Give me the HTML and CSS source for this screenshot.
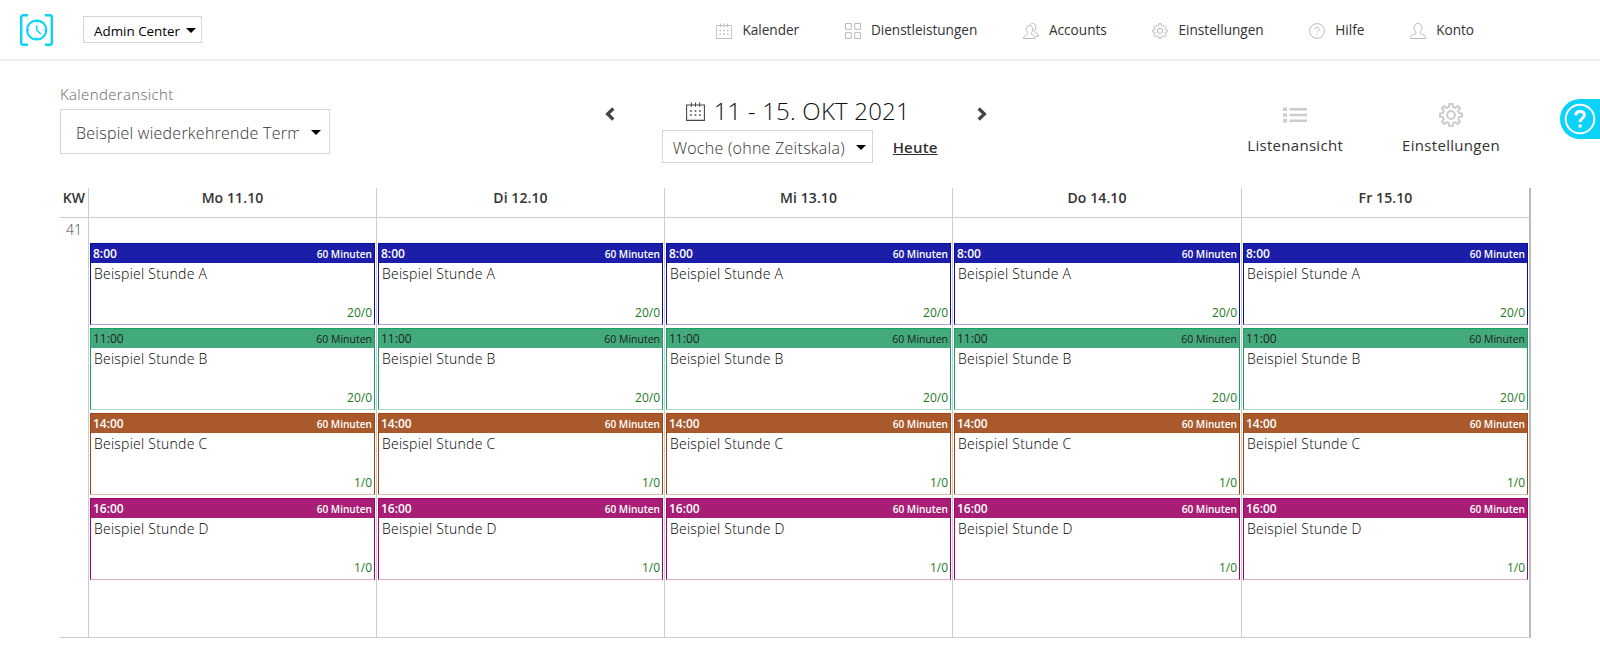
FILE: index.html
```
<!DOCTYPE html>
<html lang="de">
<head>
    <meta charset="utf-8">
    <title>Kalender</title>
    <link rel="stylesheet" href="styles.css">
</head>
<body>
    <svg width="0" height="0" class="sprite">
        <symbol id="i-calendar" viewBox="0 0 16 16">
            <path d="M.5 2.500h15v13H.5zM4.500.5v3.500M8 .5v3.500M11.500.5v3.500" stroke-width=".9"/>
            <path d="M3.500 7.500h1.400M7.300 7.500h1.400M11.100 7.500h1.400M3.500 11h1.400M7.300 11h1.400M11.100 11h1.400" stroke-width="1.300"/>
        </symbol>
        <symbol id="i-grid" viewBox="0 0 16 16">
            <path d="M.5.5h5.800v5.800H.5zM9.700.5h5.800v5.800H9.700zM.5 9.700h5.800v5.800H.5zM9.700 9.700h5.800v5.800H9.700z"/>
        </symbol>
        <symbol id="i-users" viewBox="0 0 16 16">
            <path d="M6.500 2.700c2 0 3.300 1.400 3.300 3.500 0 1.700-.7 2.700-1.500 3.500v1.400c.6 1 3.900 1.200 3.900 4.400H.5c0-3.200 3.500-3.400 4.100-4.400V9.700c-.8-.8-1.400-1.800-1.400-3.500 0-2.100 1.300-3.500 3.300-3.500z"/>
            <path d="M6.800 2.500C7.300 1.200 8.300.5 9.600.5c2 0 3.200 1.500 3.200 3.500 0 1.600-.6 2.600-1.400 3.400v1.300c.6 1 4.100 1.400 4.100 4.600h-3.200"/>
        </symbol>
        <symbol id="i-gear" viewBox="0 0 24 24">
            <path d="M10.400 1h3.200l.5 3 2.200.9 2.500-1.800 2.200 2.200-1.800 2.500.9 2.200 2.900.5v3.100l-2.900.5-.9 2.200 1.800 2.500-2.200 2.200-2.500-1.800-2.200.9-.5 3h-3.200l-.5-3-2.200-.9L5.200 21 3 18.800l1.800-2.500-.9-2.200-2.900-.5v-3.100l2.900-.5.9-2.200L3 5.300l2.200-2.200 2.500 1.800 2.200-.9z"/>
            <circle cx="12" cy="12" r="3.900"/>
        </symbol>
        <symbol id="i-help" viewBox="0 0 16 16">
            <circle cx="8" cy="8" r="7.400"/>
            <path d="M5.900 6.300c0-1.300.8-2.100 2.100-2.100s2.200.8 2.200 2c0 1.700-2.200 1.700-2.200 3.400M8 10.900v1.200"/>
        </symbol>
        <symbol id="i-user" viewBox="0 0 16 16">
            <path d="M8 .5c2.400 0 4 1.700 4 4.200 0 2-.8 3.300-1.900 4.200v1.500c.7 1.200 5.400 1.200 5.400 4v1.100H.5v-1.100c0-2.800 4.700-2.800 5.400-4V8.900C4.800 8 4 6.700 4 4.700 4 2.200 5.600.5 8 .5z"/>
        </symbol>
    </svg>

    <header class="topbar">
        <svg class="logo" viewBox="0 0 33 32">
            <path d="M8 1.200H3.200a2 2 0 0 0-2 2v25.600a2 2 0 0 0 2 2H8M25 1.200h4.800a2 2 0 0 1 2 2v25.600a2 2 0 0 1-2 2H25" stroke-width="2.400"/>
            <circle cx="16.700" cy="16" r="9.600" stroke-width="2"/>
            <path d="M16.700 11.500V16l4 4M16.700 6.500v2M16.700 23.500v2M7.200 16h2M24.200 16h2" stroke-width="1.600"/>
        </svg>
        <div class="select select-admin"><span>Admin Center</span></div>
        <nav>
            <a><svg class="icon"><use href="#i-calendar"/></svg>Kalender</a>
            <a><svg class="icon"><use href="#i-grid"/></svg>Dienstleistungen</a>
            <a><svg class="icon"><use href="#i-users"/></svg>Accounts</a>
            <a><svg class="icon small-gear"><use href="#i-gear"/></svg>Einstellungen</a>
            <a><svg class="icon"><use href="#i-help"/></svg>Hilfe</a>
            <a><svg class="icon"><use href="#i-user"/></svg>Konto</a>
        </nav>
    </header>

    <div class="toolbar">
        <div class="view">
            <label>Kalenderansicht</label>
            <div class="select select-view"><span>Beispiel wiederkehrende Termine</span></div>
        </div>

        <div class="period">
            <svg class="arrow" viewBox="0 0 10 14"><path d="M8.300 1.500 2.600 7l5.700 5.500"/></svg>
            <div class="period-main">
                <div class="period-title"><svg class="icon"><use href="#i-calendar"/></svg>11 - 15. OKT 2021</div>
                <div class="period-row">
                    <div class="select select-scale"><span>Woche (ohne Zeitskala)</span></div>
                    <a class="today">Heute</a>
                </div>
            </div>
            <svg class="arrow" viewBox="0 0 10 14"><path d="M1.700 1.500 7.400 7l-5.700 5.500"/></svg>
        </div>

        <div class="actions">
            <a>
                <svg class="list" viewBox="0 0 24 24"><path d="M0 6.200h4M0 12h4M0 17.800h4" stroke-width="3.600"/><path d="M6.500 6.200H24M6.500 12H24M6.500 17.800H24" stroke-width="2.400"/></svg>
                Listenansicht
            </a>
            <a>
                <svg class="gear"><use href="#i-gear"/></svg>
                Einstellungen
            </a>
        </div>
    </div>

    <div class="help-tab">
        <svg viewBox="0 0 32 32"><circle cx="16" cy="16" r="14.300" stroke-width="2"/><path d="M11.700 12.300c.2-2.500 1.900-3.900 4.400-3.900 2.600 0 4.300 1.400 4.300 3.700 0 3.200-4.300 3.300-4.300 6.900M16.100 21.400v3.200" stroke-width="3"/></svg>
    </div>

    <table class="calendar">
        <thead>
            <tr><th class="kw">KW</th><th>Mo 11.10</th><th>Di 12.10</th><th>Mi 13.10</th><th>Do 14.10</th><th>Fr 15.10</th></tr>
        </thead>
        <tbody>
            <tr id="week"><td class="kw">41</td></tr>
        </tbody>
    </table>

    <script>
        const lessons = [
            { time: "8:00", name: "Beispiel Stunde A", seats: "20/0", color: "blue" },
            { time: "11:00", name: "Beispiel Stunde B", seats: "20/0", color: "green" },
            { time: "14:00", name: "Beispiel Stunde C", seats: "1/0", color: "brown" },
            { time: "16:00", name: "Beispiel Stunde D", seats: "1/0", color: "pink" }
        ];
        const week = document.getElementById("week");
        for (let day = 0; day < 5; day++) {
            const cell = document.createElement("td");
            cell.innerHTML = lessons.map(l =>
                `<div class="event ${l.color}">
                    <div class="event-head"><span>${l.time}</span><small>60 Minuten</small></div>
                    <div class="event-name">${l.name}</div>
                    <div class="event-seats">${l.seats}</div>
                </div>`
            ).join("");
            week.appendChild(cell);
        }
    </script>
</body>
</html>
```
FILE: styles.css
```
* {
    box-sizing: border-box;
}
body {
    margin: 0;
    font-family: "Open Sans", sans-serif;
    font-size: 14px;
    color: #333;
    background: #fff;
}
svg {
    fill: none;
    stroke: currentColor;
    flex: none;
}
.sprite {
    position: absolute;
}
.icon {
    width: 16px;
    height: 16px;
}

/* top bar */
.topbar {
    display: flex;
    align-items: center;
    height: 61px;
    padding-left: 20px;
    border-bottom: 2px solid #eee;
}
.logo {
    width: 33px;
    height: 32px;
    color: #0cd2fa;
}
nav {
    display: flex;
    margin: 0 126px 0 auto;
    gap: 45.700px;
    font-size: 13.600px;
}
nav a {
    display: flex;
    align-items: center;
    gap: 10px;
}
nav .icon {
    margin-top: 3px;
    color: #bbb;
}
nav .small-gear {
    stroke-width: 1.5;
}

.select {
    display: flex;
    align-items: center;
    justify-content: space-between;
    border: 1px solid #d5d5d5;
    white-space: nowrap;
}
.select span {
    overflow: hidden;
}
.select::after {
    content: "";
    flex: none;
    border: 5px solid transparent;
    border-top-color: #000;
    border-bottom: 0;
}
.select-admin {
    width: 119px;
    height: 27px;
    margin-left: 30px;
    padding: 2px 5px 0 10px;
    font-size: 13.4px;
    color: #000;
}

/* toolbar */
.toolbar {
    display: flex;
    justify-content: space-between;
    height: 127px;
    padding: 23px 100px 0 60px;
}
.view {
    width: 270px;
}
.view label {
    display: block;
    height: 25px;
    line-height: 21px;
    font-size: 15px;
    font-weight: 300;
    letter-spacing: .35px;
    color: #666;
}
.select-view {
    height: 45px;
    padding: 2px 8px 0 15px;
    font-size: 16px;
    font-weight: 300;
    letter-spacing: .25px;
}
.select-view span {
    width: 223px;
}
.period {
    display: flex;
    margin-left: 14px;
}
.arrow {
    width: 10px;
    height: 14px;
    margin-top: 23px;
    stroke-width: 3.2;
    color: #444;
}
.period-main {
    width: 277px;
    margin: 7px 38px 0 47px;
}
.period-title {
    display: flex;
    align-items: center;
    gap: 9px;
    height: 39px;
    padding-left: 24px;
    font-size: 24px;
    font-weight: 300;
    letter-spacing: .2px;
    white-space: nowrap;
    color: #111;
}
.period-title .icon {
    width: 19px;
    height: 19px;
    margin-top: 2px;
    color: #444;
}
.period-row {
    display: flex;
    align-items: center;
    gap: 20px;
}
.select-scale {
    width: 211px;
    height: 33px;
    padding: 2px 6px 0 10px;
    font-size: 16px;
    font-weight: 300;
    letter-spacing: .27px;
}
.today {
    font-size: 15px;
    font-weight: 600;
    letter-spacing: .2px;
    text-decoration: underline;
    margin-top: 1px;
}
.actions {
    display: flex;
    gap: 59px;
    padding-top: 19px;
}
.actions a {
    display: flex;
    flex-direction: column;
    align-items: center;
    gap: 8px;
    font-size: 15px;
    letter-spacing: .3px;
}
.actions svg {
    width: 24px;
    height: 24px;
    color: #ccc;
}
.actions .gear {
    stroke-width: 2;
}
.help-tab {
    position: absolute;
    top: 99px;
    right: 0;
    width: 40px;
    height: 40px;
    padding: 4px;
    border-radius: 20px 0 0 20px;
    background: #0cd2fa;
    color: #fff;
}
.help-tab svg {
    display: block;
    width: 32px;
    height: 32px;
}

/* calendar */
.calendar {
    width: 1471px;
    margin-left: 60px;
    table-layout: fixed;
    border-collapse: separate;
    border-spacing: 0;
}
th, td {
    width: 288px;
    padding: 0;
    border-right: 1px solid #ccc;
    border-bottom: 1px solid #ccc;
}
th {
    height: 30px;
    padding-bottom: 10px;
    font-weight: 600;
    line-height: 19px;
    letter-spacing: .1px;
}
/* the leftover pixels of the row go here */
th:nth-child(5), th:last-child {
    width: 289px;
}
td {
    height: 420px;
    padding: 25px 1px 0 1px;
    vertical-align: top;
}
th:last-child, td:last-child {
    border-right: 2px solid #bbb;
}
th.kw, td.kw {
    width: 29px;
}
td.kw {
    padding: 2px 0 0 0;
    text-align: center;
    font-weight: 300;
    color: #444;
}
.event {
    height: 82px;
    margin-bottom: 3px;
    border: 1px solid var(--edge);
    border-bottom-color: var(--soft);
    line-height: 18px;
}
.event-head {
    display: flex;
    justify-content: space-between;
    height: 19px;
    padding: 0 2px;
    font-size: 12px;
    font-weight: 600;
    line-height: 19px;
    color: #fff;
    background: var(--fill);
}
.event-head small {
    font-size: 10.100px;
    line-height: 20px;
}
.event-name {
    padding: 2px 3px 0;
    font-weight: 300;
    letter-spacing: .24px;
    color: #000;
}
.event-seats {
    padding: 21px 2px 0;
    font-size: 12px;
    text-align: right;
    color: #1a7a1a;
}
.blue {
    --fill: #1c1ea9;
    --edge: #0a0c9b;
    --soft: #a5a5d8;
}
.green {
    --fill: #43aa7b;
    --edge: #16a068;
    --soft: #a9d8c1;
}
.brown {
    --fill: #a9592c;
    --edge: #a04412;
    --soft: #dcbcab;
}
.pink {
    --fill: #a81e76;
    --edge: #a00068;
    --soft: #dca9c6;
}
.green .event-head {
    font-weight: 400;
    color: #222;
}
.green small {
    font-size: 10.500px;
}
```
